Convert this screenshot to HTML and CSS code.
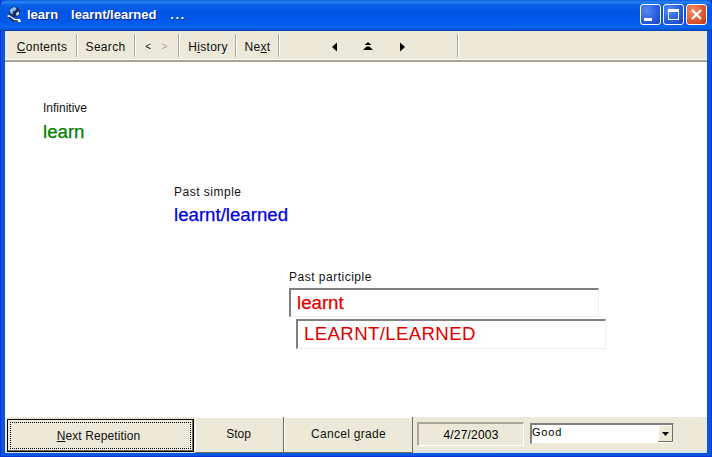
FILE: index.html
```html
<!DOCTYPE html>
<html lang="en">
<head>
<meta charset="utf-8">
<title>learn</title>
<link rel="stylesheet" href="styles.css">
</head>
<body>
<div class="window">
  <header class="titlebar">
    <svg class="app-icon" width="17" height="17" viewBox="0 0 17 17">
      <circle cx="8.5" cy="6" r="5.5" fill="#1c2f63"/>
      <path d="M5 2.5l3-1.5 2.5 1-1 2.5-2.5 1-.5 3-2-1.5-1-2.5z" fill="#8fbdea"/>
      <path d="M10 7l3-1.5 0 3-2.5 1.5z" fill="#c4dcf2"/>
      <path d="M1 10l2-1 6 4 5 0 1 3-6 0z" fill="#fff"/>
      <path d="M3 11l5 4h4" stroke="#0c1433" stroke-width="1.5" fill="none"/>
    </svg>
    <span class="title-text">learn</span>
    <span class="title-text title-second">learnt/learned</span>
    <span class="title-text title-third">...</span>
    <div class="caption-buttons">
      <div class="cap cap-min"><span class="min-bar"></span></div>
      <div class="cap cap-max"><span class="max-box"></span></div>
      <div class="cap cap-close">
        <svg width="13" height="13" viewBox="0 0 13 13"><path d="M2 2l9 9M11 2l-9 9" stroke="#fff" stroke-width="2.4"/></svg>
      </div>
    </div>
  </header>
  <div class="client">
    <nav class="toolbar">
      <div class="tool w-contents"><span><u>C</u>ontents</span></div>
      <div class="tool w-search"><span>Search</span></div>
      <div class="tool w-arrows"><span class="lt">&lt;</span><span class="gt">&gt;</span></div>
      <div class="tool w-history"><span>H<u>i</u>story</span></div>
      <div class="tool w-next"><span>Ne<u>x</u>t</span></div>
      <div class="tool w-nav">
        <svg width="8" height="10" viewBox="0 0 8 10"><path d="M6 0.5v9L1 5z" fill="#000"/></svg>
        <svg class="nav-up" width="12" height="9" viewBox="0 0 12 9"><path d="M6 0L9.5 3H2.5z M1 8L4.5 4.5h3L11 8z" fill="#000"/></svg>
        <svg width="8" height="10" viewBox="0 0 8 10"><path d="M2 0.5v9L7 5z" fill="#000"/></svg>
      </div>
    </nav>
    <main class="canvas">
      <section class="item item-inf">
        <div class="label">Infinitive</div>
        <div class="value green">learn</div>
      </section>
      <section class="item item-past">
        <div class="label label-wide">Past simple</div>
        <div class="value blue">learnt/learned</div>
      </section>
      <section class="item item-part">
        <div class="label label-wide">Past participle</div>
        <div class="box box-answer">learnt</div>
        <div class="box box-correct">LEARNT/LEARNED</div>
      </section>
    </main>
    <footer class="bottombar">
      <button class="btn btn-next"><span class="focus"><span class="next-label"><u>N</u>ext Repetition</span></span></button>
      <button class="btn btn-stop">Stop</button>
      <button class="btn btn-cancel">Cancel <u>g</u>rade</button>
      <div class="date">4/27/2003</div>
      <div class="combo">
        <span class="combo-text">Good</span>
        <span class="combo-btn"><svg width="7" height="4" viewBox="0 0 7 4"><path d="M0 0h7L3.5 4z" fill="#000"/></svg></span>
      </div>
    </footer>
  </div>
</div>
</body>
</html>
```
FILE: styles.css
```css
* { box-sizing: border-box; }
html, body { margin: 0; padding: 0; }
body { width: 712px; height: 457px; overflow: hidden; font-family: "Liberation Sans", Arial, sans-serif; font-size: 12px; color: #000; }
.window { width: 712px; height: 457px; display: flex; flex-direction: column; background: #0856dd; padding: 0 4px 3px 4px; border-left: 1px solid #0831d9; border-right: 1px solid #0831d9; border-bottom: 1px solid #0831d9; }
.titlebar { height: 31px; margin: 0 -5px; padding: 0 5px 2px 6px; display: flex; align-items: center; flex: none; background: linear-gradient(#0a5ae0 0, #2a83f0 2px, #0a62e8 5px, #0055e4 12px, #0058ea 22px, #0a66f0 27px, #0550d0 30px, #0a3a9a 31px); border-radius: 7px 7px 0 0; }
.app-icon { flex: none; margin-right: 4px; }
.title-text { color: #fff; font-weight: bold; font-size: 13px; text-shadow: 1px 1px 0 #0a2a90; }
.title-second { margin-left: 13px; }
.title-third { margin-left: 14px; letter-spacing: 1.5px; }
.caption-buttons { margin-left: auto; display: flex; gap: 2px; padding-right: 0; }
.cap { width: 21px; height: 21px; border: 1px solid #fff; border-radius: 3px; position: relative; display: flex; align-items: center; justify-content: center; }
.cap-min, .cap-max { background: radial-gradient(circle at 30% 30%, #5a8cf0 0, #2a5ee0 55%, #1a3fc0 100%); }
.cap-close { background: radial-gradient(circle at 30% 30%, #f0906a 0, #df5a30 55%, #c03a18 100%); }
.min-bar { width: 8px; height: 3px; background: #fff; margin: 9px 6px 0 0; }
.max-box { width: 11px; height: 11px; border: 1px solid #fff; border-top-width: 3px; }
.client { flex: 1; display: flex; flex-direction: column; min-height: 0; background: #ece9d8; }
.toolbar { height: 31px; flex: none; display: flex; align-items: stretch; padding: 3px 0 3px 3px; background: #ece9d8; border-bottom: 2px solid #a8a594; box-shadow: inset 0 -1px 0 #fff; }
.tool { display: flex; align-items: center; justify-content: center; border-right: 1px solid #aca899; box-shadow: 1px 0 0 #fff; font-size: 12px; color: #111; letter-spacing: 0.3px; padding-top: 2px; }
.w-contents { width: 69px; }
.w-search { width: 58px; }
.w-arrows { width: 44px; gap: 10px; font-size: 10px; }
.gt { color: #aca899; }
.w-history { width: 57px; padding-left: 2px; }
.w-next { width: 43px; padding-left: 1px; }
.w-nav { width: 179px; gap: 23px; padding-right: 0; }
.nav-up { margin: 0 1px 0 0; }
.canvas { flex: 1; background: #fff; display: flex; flex-direction: column; min-height: 0; }
.item { flex: none; }
.label { font-size: 12px; line-height: 14px; color: #111; }
.label-wide { letter-spacing: 0.5px; }
.value { font-size: 18.67px; line-height: 21px; -webkit-text-stroke: 0.25px currentColor; }
.green { color: #008000; margin-top: 6px; }
.blue { color: #0000e0; margin-top: 5px; }
.item-inf { margin: 39px 0 0 38px; }
.item-past { margin: 43px 0 0 169px; }
.item-part { margin: 45px 0 0 284px; }
.box { width: 310px; height: 29px; font-size: 18.67px; line-height: 26px; color: #e00000; background: #fff; border-top: 2px solid #808080; border-left: 2px solid #808080; border-right: 1px solid #f0efe8; border-bottom: 1px solid #f0efe8; padding-left: 6px; -webkit-text-stroke: 0.25px currentColor; }
.box-answer { margin-top: 4px; }
.box-correct { margin: 2px 0 0 7px; height: 30px; line-height: 25px; letter-spacing: 0.35px; -webkit-text-stroke: 0; }
.bottombar { height: 36px; flex: none; display: flex; align-items: stretch; background: linear-gradient(#ece9d8 32px, #cfe0e6 36px); padding: 0; }
.btn { font: inherit; font-size: 12px; color: #111; background: #ece9d8; border: 0; padding: 0 0 2px; letter-spacing: 0.3px; box-shadow: inset -1px -1px 0 #716f64, inset 1px 1px 0 #fff; }
.btn-next { width: 187px; margin: 2px 0 1px 2px; border: 1px solid #000; padding: 2px; letter-spacing: 0.1px; box-shadow: inset -1px -1px 0 #716f64; }
.focus { display: flex; width: 100%; height: 100%; align-items: center; justify-content: center; border: 1px dotted #000; }
.next-label { margin-right: 4px; }
.btn-stop { width: 89px; margin-left: 1px; padding-right: 2px; letter-spacing: 0; }
.btn-cancel { width: 129px; }
.date { width: 107px; height: 24px; margin: 5px 0 0 4px; display: flex; align-items: center; justify-content: center; border: 1px solid #aca899; border-top-width: 2px; border-left-width: 2px; border-right-color: #fff; border-bottom-color: #fff; letter-spacing: 0.2px; }
.combo { width: 144px; height: 21px; margin: 6px 0 0 6px; background: #fff; display: flex; justify-content: space-between; border-top: 2px solid #808080; border-left: 2px solid #808080; border-right: 1px solid #ece9d8; border-bottom: 1px solid #ece9d8; font-size: 11px; letter-spacing: 0.8px; }
.combo-text { padding: 1px 0 0 0; }
.combo-btn { width: 15px; height: 17px; background: #ece9d8; display: flex; align-items: center; justify-content: center; box-shadow: inset -1px -1px 0 #716f64, inset 1px 1px 0 #fff; }
```
